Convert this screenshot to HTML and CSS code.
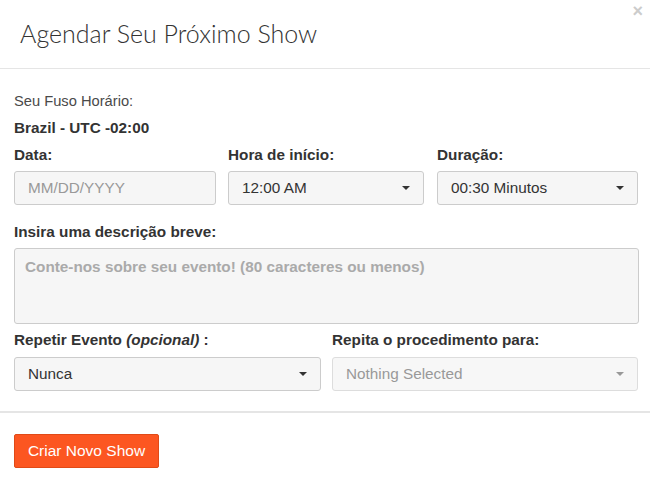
FILE: index.html
```html
<!DOCTYPE html>
<html lang="pt">
<head>
<meta charset="utf-8">
<title>Agendar Seu Próximo Show</title>
<link rel="stylesheet" href="styles.css">
</head>
<body>
<div class="modal">
  <span class="close">×</span>
  <div class="modal-header">
    <h1 class="title">Agendar Seu Próximo Show</h1>
  </div>
  <div class="modal-body">
    <div class="tz-label">Seu Fuso Horário:</div>
    <div class="tz-value">Brazil - UTC -02:00</div>
    <div class="row3">
      <div class="field">
        <label class="lbl">Data:</label>
        <div class="control placeholder">MM/DD/YYYY</div>
      </div>
      <div class="field">
        <label class="lbl">Hora de início:</label>
        <div class="control select"><span>12:00 AM</span><i class="caret"></i></div>
      </div>
      <div class="field">
        <label class="lbl">Duração:</label>
        <div class="control select"><span>00:30 Minutos</span><i class="caret"></i></div>
      </div>
    </div>
    <div class="field desc">
      <label class="lbl">Insira uma descrição breve:</label>
      <div class="textarea">Conte-nos sobre seu evento! (80 caracteres ou menos)</div>
    </div>
    <div class="row2">
      <div class="field">
        <label class="lbl">Repetir Evento <em>(opcional)</em> :</label>
        <div class="control select"><span>Nunca</span><i class="caret"></i></div>
      </div>
      <div class="field">
        <label class="lbl">Repita o procedimento para:</label>
        <div class="control select disabled"><span>Nothing Selected</span><i class="caret"></i></div>
      </div>
    </div>
  </div>
  <div class="modal-footer">
    <button class="btn">Criar Novo Show</button>
  </div>
</div>
</body>
</html>
```
FILE: styles.css
```css
* { box-sizing: border-box; }
html, body { margin: 0; padding: 0; background: #fff; }
body {
  font-family: "Liberation Sans", Arial, sans-serif;
  font-size: 15.3px;
  color: #333;
  width: 650px;
  height: 489px;
  overflow: hidden;
}
.modal { position: relative; width: 650px; }
.close {
  position: absolute;
  right: 7px;
  top: 1px;
  font-size: 18px;
  font-weight: bold;
  color: #ccc;
  line-height: 20px;
}
.modal-header {
  height: 69px;
  border-bottom: 1px solid #e5e5e5;
  padding: 18px 0 0 20px;
}
.title {
  margin: 0;
  font-family: Lato, "Open Sans", sans-serif;
  font-weight: 300;
  font-size: 25px;
  line-height: 30px;
  color: #333;
}
.modal-body { padding: 22px 11px 0 14px; }
.tz-label { line-height: 20px; font-size: 14.7px; color: #4a4a4a; }
.tz-value { line-height: 20px; margin-top: 7px; font-weight: bold; }
.row3 {
  display: grid;
  grid-template-columns: 202px 196px 202px;
  column-gap: 12px;
  margin-top: 7px;
}
.row3 .field:last-child { margin-left: 1px; }
.row2 {
  display: grid;
  grid-template-columns: 307px 306px;
  column-gap: 11px;
  margin-top: 6px;
}
.field { display: flex; flex-direction: column; }
.lbl { font-weight: bold; line-height: 20px; margin-bottom: 6px; }
.row2 .lbl { margin-bottom: 7px; }
.lbl em { font-style: italic; }
.control {
  height: 34px;
  border: 1px solid #ccc;
  border-radius: 3px;
  background: #f6f6f6;
  padding: 0 13px;
  display: flex;
  align-items: center;
  line-height: 20px;
  color: #333;
}
.control.placeholder { color: #999; }
.select { justify-content: space-between; padding-right: 13px; }
.caret {
  width: 0;
  height: 0;
  border-left: 4px solid transparent;
  border-right: 4px solid transparent;
  border-top: 4px solid #333;
}
.select.disabled { color: #999; background: #f7f7f7; border-color: #ddd; }
.select.disabled .caret { border-top-color: #999; }
.desc { margin-top: 17px; }
.textarea {
  width: 625px;
  height: 76px;
  border: 1px solid #ccc;
  border-radius: 3px;
  background: #f6f6f6;
  padding: 8px 10px;
  line-height: 20px;
  font-weight: bold;
  color: #aaa;
}
.modal-footer {
  margin-top: 20px;
  border-top: 2px solid #e5e5e5;
  padding: 21px 0 0 14px;
}
.btn {
  font-family: "Liberation Sans", Arial, sans-serif;
  font-size: 15.5px;
  color: #fff;
  background: #fc5621;
  border: 1px solid #e04a17;
  border-radius: 2px;
  height: 34px;
  width: 145px;
  padding: 0;
  line-height: 32px;
}
```
